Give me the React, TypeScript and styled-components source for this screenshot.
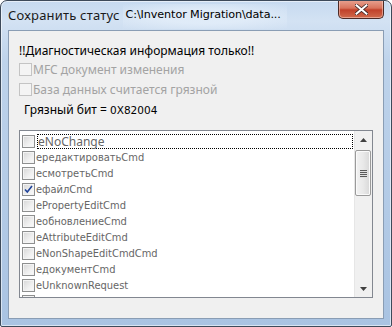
import React from 'react'
import styled, { createGlobalStyle } from 'styled-components'

const GlobalStyle = createGlobalStyle`
	html, body {
		margin: 0;
		padding: 0;
		background: #ffffff;
	}
	body {
		font-family: 'Noto Sans', 'Liberation Sans', sans-serif;
	}
`

const items = [
	{ label: 'eNoChange', checked: false, focus: true },
	{ label: 'ередактироватьCmd', checked: false },
	{ label: 'есмотретьCmd', checked: false },
	{ label: 'ефайлCmd', checked: true },
	{ label: 'ePropertyEditCmd', checked: false },
	{ label: 'еобновлениеCmd', checked: false },
	{ label: 'eAttributeEditCmd', checked: false },
	{ label: 'eNonShapeEditCmdCmd', checked: false },
	{ label: 'едокументCmd', checked: false },
	{ label: 'eUnknownRequest', checked: false },
	{ label: 'eUpdateSelEditCmd', checked: false },
]

const CheckBox = ({ checked, disabled }: { checked?: boolean; disabled?: boolean }) => (
	<Box $disabled={disabled}>
		{checked && (
			<svg width="9" height="9" viewBox="0 0 9 9">
				<path d="M1 4.5 L3.3 7 L8 1" fill="none" stroke="#21449a" strokeWidth="1.6" />
			</svg>
		)}
	</Box>
)

const App = () => {
	return (
		<>
			<GlobalStyle />
			<Window>
				<TitleBar>
					<Caption>Сохранить статус</Caption>
					<Path>C:\Inventor Migration\data...</Path>
					<CloseButton>
						<svg width="13" height="11" viewBox="0 0 13 11">
							<path
								d="M1 1 L12 10 M12 1 L1 10"
								stroke="#3d2626"
								strokeWidth="3.6"
								strokeLinecap="square"
							/>
							<path
								d="M1.5 1.3 L11.5 9.7 M11.5 1.3 L1.5 9.7"
								stroke="#ffffff"
								strokeWidth="2"
								strokeLinecap="square"
							/>
						</svg>
					</CloseButton>
				</TitleBar>

				<Client>
					<Heading>!!Диагностическая информация только!!</Heading>
					<Option>
						<CheckBox disabled />
						<span>MFC документ изменения</span>
					</Option>
					<Option>
						<CheckBox disabled />
						<span>База данных считается грязной</span>
					</Option>
					<DirtyBit>
						Грязный бит = <Mono>0X82004</Mono>
					</DirtyBit>

					<ListBox>
						<Rows>
							{items.map((item) => (
								<Row key={item.label}>
									<CheckBox checked={item.checked} />
									<RowLabel $focus={item.focus}>{item.label}</RowLabel>
								</Row>
							))}
						</Rows>
						<ScrollBar>
							<Arrow>
								<svg width="7" height="4" viewBox="0 0 7 4">
									<path d="M0 4 L3.5 0 L7 4 Z" fill="#404040" />
								</svg>
							</Arrow>
							<Thumb>
								<Grip />
								<Grip />
								<Grip />
								<Grip />
							</Thumb>
							<Track />
							<Arrow>
								<svg width="7" height="4" viewBox="0 0 7 4">
									<path d="M0 0 L7 0 L3.5 4 Z" fill="#404040" />
								</svg>
							</Arrow>
						</ScrollBar>
					</ListBox>
				</Client>
			</Window>
		</>
	)
}

export default App

const Window = styled.div`
	width: 392px;
	height: 327px;
	box-sizing: border-box;
	border: 1px solid #3d4a5a;
	border-radius: 7px 7px 2px 2px;
	background: linear-gradient(
		to bottom,
		#c6daf0 0px,
		#d3e2f3 20px,
		#bed3eb 60px,
		#a9c3e2 100%
	);
	display: flex;
	flex-direction: column;
	overflow: hidden;
	box-shadow: inset 0 0 0 1px rgba(255, 255, 255, 0.55);
`

const TitleBar = styled.div`
	height: 28px;
	display: flex;
	align-items: flex-start;
	padding-left: 7px;
	position: relative;
`

const Caption = styled.span`
	font-family: 'Noto Sans', 'Open Sans', sans-serif;
	font-size: 13px;
	color: #1a1a1a;
	margin-top: 5px;
	letter-spacing: 0.2px;
`

const Path = styled.span`
	font-family: 'DejaVu Sans', 'Liberation Sans', sans-serif;
	font-size: 11.2px;
	letter-spacing: -0.1px;
	color: #000000;
	margin-left: 3px;
	margin-top: 3px;
	padding: 4px 6px 8px 3px;
	background: radial-gradient(
		ellipse at center,
		rgba(226, 237, 249, 0.85) 40%,
		rgba(226, 237, 249, 0.4) 70%,
		rgba(226, 237, 249, 0) 100%
	);
`

const CloseButton = styled.div`
	position: absolute;
	right: 7px;
	top: -1px;
	width: 46px;
	height: 19px;
	box-sizing: border-box;
	border: 1px solid #4c2a26;
	border-top: none;
	border-radius: 0 0 5px 5px;
	background: linear-gradient(to bottom, #e8a493 0%, #d8735c 45%, #c1412a 55%, #d06a4c 100%);
	display: flex;
	align-items: center;
	justify-content: center;
	box-shadow: inset 0 0 0 1px rgba(255, 220, 210, 0.5);
`

const Client = styled.div`
	flex: 1;
	margin: 1px 7px 7px 7px;
	box-sizing: border-box;
	border: 1px solid #8a9db4;
	background: #f0f0f0;
	display: flex;
	flex-direction: column;
	padding: 12px 0 0 10px;
	font-family: 'Noto Sans', 'Open Sans', sans-serif;
	font-size: 12px;
`

const Heading = styled.div`
	color: #000000;
	height: 16px;
	line-height: 16px;
`

const Option = styled.div`
	display: flex;
	align-items: center;
	gap: 1px;
	height: 20px;
	color: #a3a3a3;

	&:first-of-type {
		margin-top: 1px;
	}
`

const DirtyBit = styled.div`
	color: #000000;
	margin: 3px 0 0 5px;
	height: 16px;
	line-height: 16px;
`

const Mono = styled.span`
	font-family: 'DejaVu Sans', sans-serif;
	font-size: 10.5px;
`

const Box = styled.span<{ $disabled?: boolean }>`
	width: 13px;
	height: 13px;
	box-sizing: border-box;
	flex: none;
	border: 1px solid ${(p) => (p.$disabled ? '#c4c4c4' : '#8e8f8f')};
	background: ${(p) =>
		p.$disabled
			? '#f4f4f4'
			: 'linear-gradient(135deg, #d6d6d6 0%, #f0f0f0 60%, #fbfbfb 100%)'};
	box-shadow: inset 0 0 0 1px #f4f4f4;
	display: flex;
	align-items: center;
	justify-content: center;
`

const ListBox = styled.div`
	margin-top: 12px;
	width: 354px;
	height: 168px;
	box-sizing: border-box;
	border: 1px solid #828790;
	background: #ffffff;
	display: flex;
	overflow: hidden;
`

const Rows = styled.div`
	flex: 1;
	display: flex;
	flex-direction: column;
	padding: 2px 0 0 2px;
	overflow: hidden;
`

const Row = styled.div`
	display: flex;
	align-items: center;
	height: 16px;
	flex: none;
	color: #666666;
	font-family: 'DejaVu Sans Condensed', 'DejaVu Sans', sans-serif;
	font-stretch: condensed;
	font-size: 11px;
`

const RowLabel = styled.span<{ $focus?: boolean }>`
	flex: 1;
	height: 15px;
	line-height: 13px;
	box-sizing: border-box;
	padding-left: 0;
	border: 1px dotted ${(p) => (p.$focus ? '#000000' : 'transparent')};
	border-left-width: ${(p) => (p.$focus ? '1px' : '0')};
	margin-left: ${(p) => (p.$focus ? '2px' : '1px')};
	font-size: ${(p) => (p.$focus ? '12px' : '11px')};
	font-family: ${(p) => (p.$focus ? "'Noto Sans', sans-serif" : 'inherit')};
	font-stretch: ${(p) => (p.$focus ? 'normal' : 'condensed')};
	margin-right: 1px;
	white-space: nowrap;
`

const ScrollBar = styled.div`
	width: 17px;
	flex: none;
	display: flex;
	flex-direction: column;
	background: #f0f0f0;
	border-left: 1px solid #e6e6e6;
`

const Arrow = styled.div`
	height: 17px;
	flex: none;
	display: flex;
	align-items: center;
	justify-content: center;
`

const Thumb = styled.div`
	height: 46px;
	margin: 2px 1px 0 0;
	box-sizing: border-box;
	border: 1px solid #9a9a9a;
	border-radius: 2px;
	background: linear-gradient(to right, #f2f2f2 0%, #e9e9e9 50%, #d8d8d8 100%);
	display: flex;
	flex-direction: column;
	align-items: center;
	justify-content: center;
	gap: 1px;
	box-shadow: inset 0 0 0 1px #fafafa;
`

const Grip = styled.div`
	width: 7px;
	height: 1px;
	background: #5a5a5a;
	box-shadow: 0 1px 0 #e0e0e0;
`

const Track = styled.div`
	flex: 1;
`
